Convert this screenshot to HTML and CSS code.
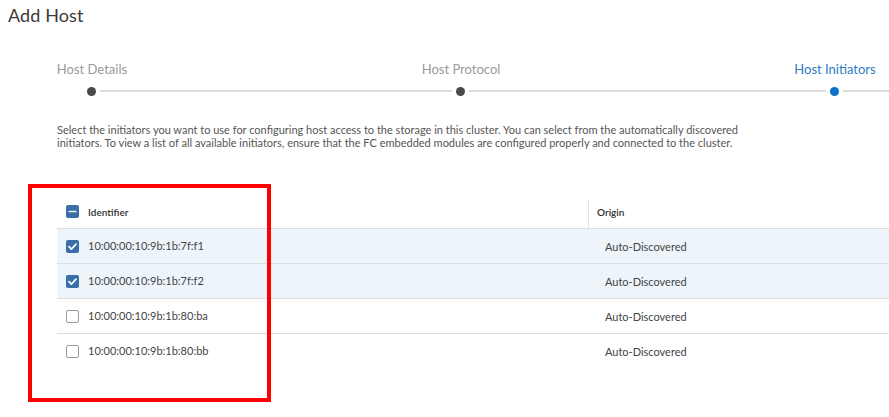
FILE: index.html
```html
<!DOCTYPE html>
<html lang="en">
<head>
    <meta charset="UTF-8">
    <meta name="viewport" content="width=device-width, initial-scale=1.0">
    <title>Add Host</title>
    <link rel="stylesheet" href="styles.css">
</head>
<body>

    <div class="page">
        <h1 class="title">Add Host</h1>

        <div class="stepper">
            <div class="step">
                <div class="step-label">Host Details</div>
                <div class="rail"><span class="dot"></span><span class="line"></span></div>
            </div>
            <div class="step">
                <div class="step-label">Host Protocol</div>
                <div class="rail"><span class="dot"></span><span class="line"></span></div>
            </div>
            <div class="step current">
                <div class="step-label">Host Initiators</div>
                <div class="rail"><span class="dot"></span><span class="line"></span></div>
            </div>
        </div>

        <p class="intro">
            Select the initiators you want to use for configuring host access to the storage in this cluster. You can select from the automatically discovered<br>
            initiators. To view a list of all available initiators, ensure that the FC embedded modules are configured properly and connected to the cluster.
        </p>

        <table class="grid">
            <thead>
                <tr>
                    <th class="col-id"><span class="check partial"><svg viewBox="0 0 14 14"><path d="M3.5 7h7" /></svg></span>Identifier</th>
                    <th class="col-origin">Origin</th>
                </tr>
            </thead>
            <tbody>
                <tr class="selected">
                    <td class="ident"><span class="check on"><svg viewBox="0 0 14 14"><path d="M3.2 7.2l2.6 2.6 5-5.4" /></svg></span>10:00:00:10:9b:1b:7f:f1</td>
                    <td class="origin">Auto-Discovered</td>
                </tr>
                <tr class="selected">
                    <td class="ident"><span class="check on"><svg viewBox="0 0 14 14"><path d="M3.2 7.2l2.6 2.6 5-5.4" /></svg></span>10:00:00:10:9b:1b:7f:f2</td>
                    <td class="origin">Auto-Discovered</td>
                </tr>
                <tr>
                    <td class="ident"><span class="check"></span>10:00:00:10:9b:1b:80:ba</td>
                    <td class="origin">Auto-Discovered</td>
                </tr>
                <tr>
                    <td class="ident"><span class="check"></span>10:00:00:10:9b:1b:80:bb</td>
                    <td class="origin">Auto-Discovered</td>
                </tr>
            </tbody>
        </table>
    </div>

    <!-- annotation frame drawn over the screenshot -->
    <div class="highlight"></div>

</body>
</html>
```

FILE: styles.css
```css
body {
    font-family: Lato, "Open Sans", sans-serif;
    margin: 0;
    padding: 0;
    background-color: white;
    color: #333;
    width: 889px;
    height: 417px;
    overflow: hidden;
    position: relative;
}

.page {
    padding-top: 4px;
}

.title {
    margin: 0 0 0 8px;
    font-size: 18px;
    font-weight: 400;
    color: #3a3a3a;
    line-height: 22px;
    letter-spacing: 0.1px;
}

.stepper {
    display: grid;
    grid-template-columns: 369px 374px 1fr;
    padding-left: 87px;
    margin-top: 35px;
}

.step-label {
    width: 160px;
    margin-left: -75px;
    text-align: center;
    font-size: 13px;
    line-height: 16px;
    color: #9a9a9a;
}

.step.current .step-label {
    color: #2f7bc4;
}

.rail {
    display: flex;
    align-items: center;
    margin-top: 9px;
    height: 10px;
}

.dot {
    width: 9px;
    height: 9px;
    border-radius: 50%;
    background-color: #4a4a4a;
    flex: none;
}

.step.current .dot {
    background-color: #0a72c9;
}

.line {
    flex: 1;
    height: 2px;
    background-color: #dcdcdc;
    margin: 0 4px;
}

.step.current .line {
    margin-right: 0;
}

.intro {
    margin: 27px 0 0 57px;
    font-size: 11px;
    line-height: 13px;
    color: #555;
}

.grid {
    margin: 47px 0 0 57px;
    width: 832px;
    border-collapse: collapse;
    font-size: 11px;
    color: #444;
}

.grid th {
    height: 32px;
    padding: 0;
    text-align: left;
    font-size: 10px;
    font-weight: 600;
    color: #333;
    vertical-align: middle;
}

.grid th.col-id {
    width: 522px;
    padding-left: 9px;
}

.grid th.col-origin {
    padding-left: 9px;
    position: relative;
}

.grid th.col-origin::before {
    content: "";
    position: absolute;
    left: 0;
    top: 4px;
    bottom: 0;
    border-left: 1px solid #e2e2e2;
}

.grid td {
    height: 34px;
    padding: 0 0 0 9px;
    border-top: 1px solid #dedede;
    vertical-align: middle;
}

.grid td.origin {
    padding-left: 17px;
}

.grid tr.selected td {
    background-color: #edf4fa;
}

.check {
    display: inline-block;
    vertical-align: middle;
    width: 13px;
    height: 13px;
    box-sizing: border-box;
    border: 1.5px solid #9a9a9a;
    border-radius: 2px;
    background-color: white;
    margin: -2px 9px 0 0;
}

.check.on, .check.partial {
    border: none;
    background-color: #3a70aa;
}

.check svg {
    display: block;
    width: 13px;
    height: 13px;
    fill: none;
    stroke: white;
    stroke-width: 1.8;
    stroke-linecap: round;
    stroke-linejoin: round;
}

.highlight {
    position: absolute;
    left: 28px;
    top: 184px;
    width: 235px;
    height: 210px;
    border: 4px solid #ff0000;
}
```
